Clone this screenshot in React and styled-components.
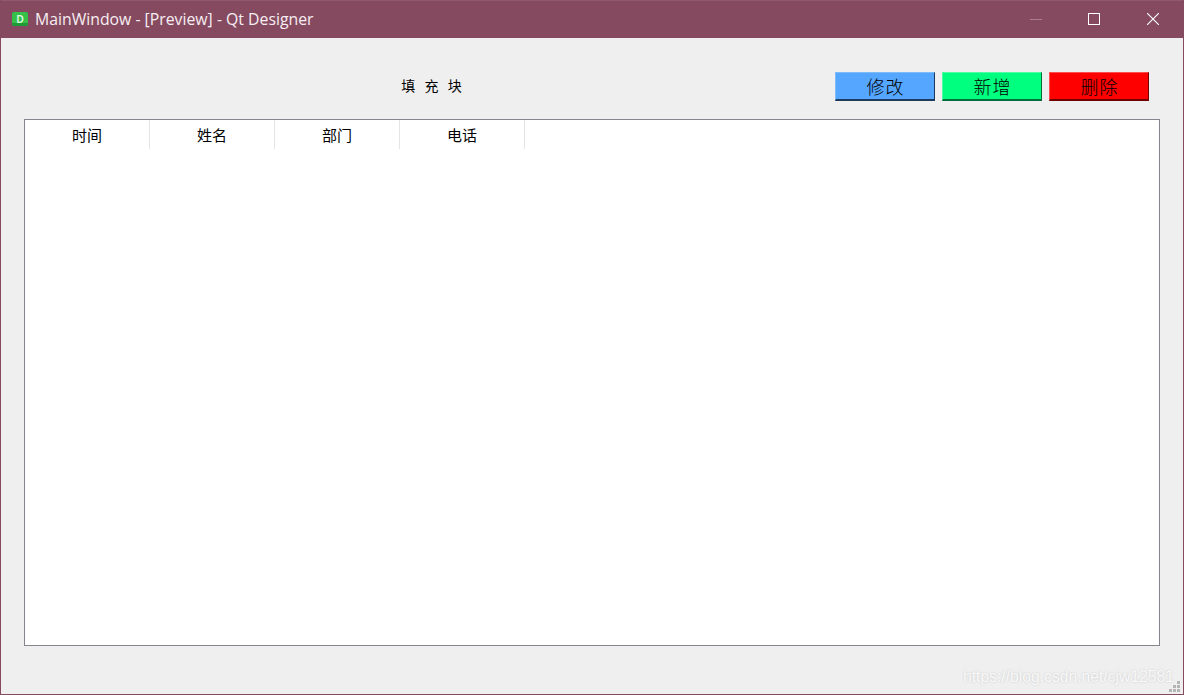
import React from "react";
import styled, {createGlobalStyle} from "styled-components";

const cjk = `"Noto Sans CJK SC", sans-serif`;

const GlobalStyle = createGlobalStyle`
    html, body {
        margin: 0;
        padding: 0;
    }
    #root {
        width: 1184px;
        height: 695px;
    }
`

const Frame = styled.div`
    position: relative;
    box-sizing: border-box;
    width: 1184px;
    height: 695px;
    display: flex;
    flex-direction: column;
    background: #efefef;
    border: 1px solid #864a60;
    border-top: 0;
    overflow: hidden;
`

const TitleBar = styled.div`
    flex: 0 0 38px;
    display: flex;
    align-items: center;
    background: #864a60;
    box-shadow: inset 0 1px 0 #8f5a6e;
    padding: 0 1px 0 10px;
`

const AppIcon = styled.svg`
    width: 17px;
    height: 16px;
    margin-right: 7px;
    flex: none;
`

const Title = styled.div`
    flex: 1;
    font: 15.8px "Open Sans", "Noto Sans", sans-serif;
    color: #f6eef2;
    white-space: nowrap;
`

const WindowButton = styled.div`
    width: 58px;
    height: 38px;
    display: flex;
    align-items: center;
    justify-content: center;

    &:last-child {
        margin-left: 1px;
    }
`

const Content = styled.div`
    flex: 1;
    display: flex;
    flex-direction: column;
    padding: 34px 23px 48px 23px;
    min-height: 0;
`

const TopRow = styled.div`
    flex: 0 0 29px;
    display: flex;
    align-items: center;
    gap: 7px;
    padding-right: 11px;
    margin-bottom: 18px;
`

const Filler = styled.div`
    flex: 1;
    text-align: center;
    font: 14px/20px ${cjk};
    color: #000;
    word-spacing: 6px;
    padding: 0 0 4px 11px;
`

const ActionButton = styled.button`
    box-sizing: border-box;
    width: 100px;
    height: 29px;
    padding: 0 0 2px 1px;
    font: 300 18px ${cjk};
    letter-spacing: 1px;
    color: #000;
    background: ${props => props.$color};
    border: 1px solid ${props => props.$light};
    border-right-color: ${props => props.$dark};
    border-bottom: 2px solid ${props => props.$dark};
`

const Table = styled.div`
    flex: 1;
    background: #fff;
    border: 1px solid #85858f;
`

const HeaderRow = styled.div`
    display: flex;
    height: 29px;
`

const HeaderCell = styled.div`
    box-sizing: border-box;
    width: 125px;
    display: flex;
    align-items: center;
    justify-content: center;
    border-right: 1px solid #e4e4e4;
    font: 15px/20px ${cjk};
    color: #000;
`

const Watermark = styled.div`
    position: absolute;
    right: 9px;
    bottom: 8px;
    font: 15.7px "Liberation Sans", sans-serif;
    color: #f9f9f9;
    text-shadow: 0 0 2px #c4c4c4;
    white-space: nowrap;
`

const Grip = styled.svg`
    position: absolute;
    right: 3px;
    bottom: 2px;
    width: 11px;
    height: 11px;
`

const columns = ["时间", "姓名", "部门", "电话"];

const gripDots = [[8, 0], [4, 4], [8, 4], [0, 8], [4, 8], [8, 8]];

const App = () => {
    return (
        <>
            <GlobalStyle/>
            <Frame>
                <TitleBar>
                    <AppIcon viewBox="0 0 17 16">
                        <rect x="1" y="1" width="16" height="14" rx="2" fill="#35c04a"/>
                        <path d="M1 12 L17 12 L17 13 Q17 15 15 15 L3 15 Q1 15 1 13Z" fill="#1f9a36"/>
                        <text x="9" y="12" textAnchor="middle" fontSize="10" fontWeight="700" fontFamily="Liberation Sans" fill="#d9f7df">D</text>
                    </AppIcon>
                    <Title>MainWindow - [Preview] - Qt Designer</Title>
                    <WindowButton>
                        <svg width="12" height="12" viewBox="0 0 12 12">
                            <rect x="0" y="6" width="12" height="1" fill="#a87e8e"/>
                        </svg>
                    </WindowButton>
                    <WindowButton>
                        <svg width="12" height="12" viewBox="0 0 12 12">
                            <rect x="0.5" y="0.5" width="11" height="11" fill="none" stroke="#fff"/>
                        </svg>
                    </WindowButton>
                    <WindowButton>
                        <svg width="12" height="12" viewBox="0 0 12 12">
                            <path d="M0 0 L12 12 M12 0 L0 12" stroke="#fff" strokeWidth="1.1"/>
                        </svg>
                    </WindowButton>
                </TitleBar>
                <Content>
                    <TopRow>
                        <Filler>填 充 块</Filler>
                        <ActionButton $color="#55a6ff" $light="#7dbbff" $dark="#1d3a5a">修改</ActionButton>
                        <ActionButton $color="#00ff7f" $light="#4dffa5" $dark="#00703a">新增</ActionButton>
                        <ActionButton $color="#ff0000" $light="#ff4d4d" $dark="#700000">删除</ActionButton>
                    </TopRow>
                    <Table>
                        <HeaderRow>
                            {columns.map(column =>
                                <HeaderCell key={column}>{column}</HeaderCell>)}
                        </HeaderRow>
                    </Table>
                </Content>
                <Watermark>https://blog.csdn.net/cjw12581</Watermark>
                <Grip viewBox="0 0 11 11">
                    {gripDots.map(([x, y]) =>
                        <rect key={`${x}-${y}`} x={x} y={y} width="3" height="3" fill="#b4b4b4"/>)}
                </Grip>
            </Frame>
        </>
    );
}

export default App;
